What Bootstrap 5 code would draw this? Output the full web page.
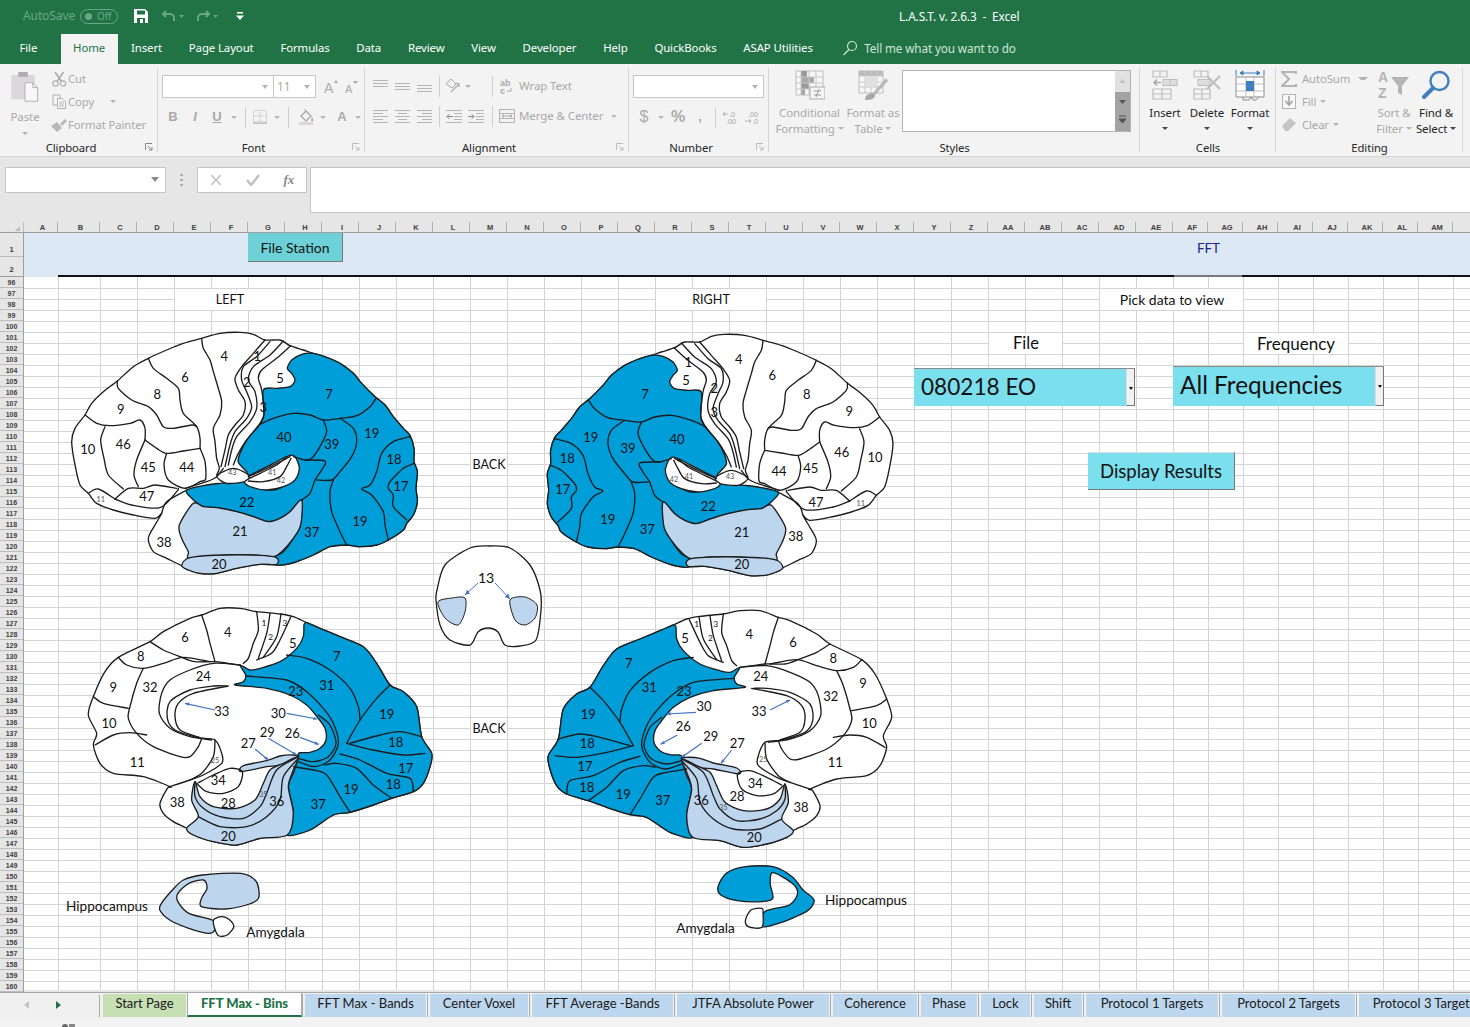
<!DOCTYPE html>
<html lang="en">
<head>
<meta charset="utf-8">
<title>L.A.S.T. v. 2.6.3 - Excel</title>
<link href="https://cdn.jsdelivr.net/npm/bootstrap@5.3.0/dist/css/bootstrap.min.css" rel="stylesheet">
<style>
html,body{width:1470px;height:1027px;overflow:hidden;margin:0;background:#e6e6e6}
body{font-family:"Noto Sans","Open Sans",sans-serif;font-size:11.5px;line-height:1.2;color:#262626;letter-spacing:-.1px}
svg{display:block}
.xl-title{height:32px;background:#217346;color:#fff;font-size:11.8px}
.xl-left{width:899px;padding-left:23px;color:#6aa587;font-size:12px}
.toggle{width:38px;height:15px;border:1px solid #6aa587;border-radius:8px;margin-left:5px;font-size:10px;padding-left:16px;line-height:13px;position:relative}
.toggle::before{content:"";position:absolute;left:4px;top:3px;width:7px;height:7px;border-radius:50%;background:#6aa587}
.qa{margin-left:16px}
.qa.u{margin-left:14px}
.qa.r{margin-left:10px}
.xl-tabs{height:32px;background:#217346;color:#fff;padding-left:6px}
.xl-tabs .tb{padding:0 13.4px;height:30px;margin-top:2px;line-height:28px;font-size:11.4px;white-space:nowrap}
.xl-tabs .tb.on{background:#f3f3f3;color:#217346;margin-left:10px;padding:0 12.5px}
.tabi{margin-left:16px;margin-top:8px}
.tell{color:#cfe3d8;margin-left:6px;font-size:11.7px;line-height:28px;margin-top:2px}
.ribbon{height:93px;background:#f3f3f3;border-bottom:1px solid #d4d4d4}
.rg{height:92px;position:relative;flex:none}
.rg::after{content:"";position:absolute;right:0;top:4px;bottom:4px;width:1px;background:#d6d6d6}
.rg-b{height:74px;flex:none}
.rg-l{height:18px;text-align:center;font-size:11.3px;line-height:19px;color:#262626;position:relative;flex:none}
.rg-l.hl{padding-right:16px}
.launch{position:absolute;right:5px;top:5px}
.g1{width:158px}.g2{width:207px}.g3{width:264px}.g4{width:140px}.g5{width:371px}.g6{width:136px}.g7{width:187px}
.d{color:#a9a9a9}
.combo{height:23px;background:#fff;border:1px solid #c6c6c6;position:relative;flex:none}
.combo::after{content:"";position:absolute;right:5px;top:9px;border:3.5px solid transparent;border-top:4px solid #b4b4b4}
.cw111{width:112px}.cw43{width:43px;padding-left:3px;color:#a9a9a9;line-height:21px;font-size:12px;margin-left:-1px}.cw131{width:131px}
.sl{display:flex;align-items:center;justify-content:center;height:22px;flex:none}
.w8{width:8px}.w10{width:10px}.w12{width:12px}.w14{width:14px}.w20{width:20px}.w22{width:22px}.w24{width:24px}.w30{width:30px}
.car{width:0;height:0;border:3px solid transparent;border-top:3.5px solid #b4b4b4;margin-top:3px;flex:none;display:inline-block}
.car.k{border-top-color:#444}
.sep{width:1px;height:21px;background:#cfcfcf;display:block}
.ltr{font-weight:700;font-size:13px;color:#a9a9a9;font-family:"Liberation Sans",sans-serif}
.pt1{padding-top:11px}.mt8{margin-top:8px}
.px5{padding-left:4px}
.ms-2px{margin-left:2px}
.paste{width:50px;padding-top:8px}
.paste .t{margin-top:3px}
.small-rows{padding-top:3px}
.sr{height:23px;font-size:11.3px}
.sr .i{width:18px;display:flex;justify-content:center;flex:none}
.ed{width:93px;flex:none}
.ed .tx{margin-left:4px}
.big{flex:none;padding-top:6px;text-align:center}
.big .i{height:35px;display:flex;justify-content:center;align-items:flex-start}
.big .t{height:16px;line-height:15px;white-space:nowrap}
.bw73{width:73px}.bw54{width:54px}.bw42{width:42px}.bw44{width:44px}
.k{color:#262626}
.gal{width:229px;height:62px;margin:6px 0 0 2px;border:1px solid #b3b3b3;background:#fff;position:relative;flex:none}
.gal .scr{position:absolute;right:0;top:0;bottom:0;width:15px;background:#e1e1e1}
.gal .scr b{position:absolute;left:0;right:0;top:21px;bottom:0;background:#a3a3a3}
.gal .scr svg{position:absolute;left:3px;top:8px;z-index:1}
.fbar{height:63px;background:#e6e6e6;padding:10px 0 0 5px}
.fn{width:161px;height:26px;background:#fff;border:1px solid #c6c6c6;position:relative;flex:none}
.fn::after{content:"";position:absolute;right:6px;top:9px;border:4px solid transparent;border-top:5px solid #8a8a8a}
.dots{width:31px;flex:none;height:26px;align-items:center;justify-content:center}
.fx{width:110px;height:26px;background:#fff;border:1px solid #c6c6c6;flex:none;font-family:"Liberation Serif",serif;font-style:italic;font-weight:700;color:#8a8a8a;font-size:13px}
.fi{height:46px;background:#fff;border:1px solid #c6c6c6;border-right:0;margin-left:3px;flex:1 1 auto}
.chd{height:13px;background:#e6e6e6;border-bottom:1px solid #9f9f9f;padding-top:2px}
.cor{width:24px;flex:none;border-right:1px solid #c0c0c0;position:relative}
.cor::after{content:"";position:absolute;right:3px;bottom:1px;border-left:5px solid transparent;border-bottom:5px solid #bdbdbd}
.cl{flex:none;width:37px;padding-left:4px;text-align:center;font:700 7.5px/12px "Liberation Sans",sans-serif;color:#404040;border-right:1px solid #b0b0b0;letter-spacing:0}
.cl.a{width:34px}.cl.b{width:42px}.cl.nn{width:35px}
.rh{width:24px;flex:none;background:#e6e6e6;border-right:1px solid #9f9f9f}
.rw{height:11px;text-align:center;font:700 7px/12px "Liberation Sans",sans-serif;color:#404040;border-bottom:1px solid #bdbdbd;letter-spacing:0}
.rw.r1{height:24px;line-height:34px;font-size:7.5px}.rw.r2{height:20px;line-height:26px;border-bottom-color:#9f9f9f;font-size:7.5px}
.band{height:44px;background:#dce9f5;position:relative;overflow:hidden;flex:1 1 auto}
.band::after{content:"";position:absolute;left:34px;right:0;bottom:0;height:2px;background:linear-gradient(to right,#111 0 1116px,#777 1116px 1184px,#111 1184px)}
.fs{position:absolute;left:224px;top:0;width:95px;height:29px;background:#6ed1d8;border:0;border-radius:0;border-right:1px solid #777;border-bottom:1px solid #777;padding:0;font:14px/29px "Lato",sans-serif;color:#111}
.fft{position:absolute;left:1173px;width:22px;top:7px;text-align:center;font:13.5px/16px "Lato",sans-serif;color:#22228c}
.canvas{height:713px;position:relative;flex:1 1 auto;overflow:hidden;background-color:#fff;background-repeat:no-repeat,no-repeat,no-repeat,no-repeat,no-repeat;
background-image:repeating-linear-gradient(to bottom,transparent 0 10px,#d4d4d4 10px 11px),
linear-gradient(#d4d4d4,#d4d4d4),linear-gradient(#d4d4d4,#d4d4d4),
repeating-linear-gradient(to right,transparent 0 36px,#d4d4d4 36px 37px),
repeating-linear-gradient(to right,transparent 0 34px,#d4d4d4 34px 35px);
background-size:100% 100%,1px 100%,1px 100%,1073px 100%,400px 100%;
background-position:0 1px,34px 0,76px 0,77px 0,1150px 0}
.canvas>svg{position:absolute;left:0;top:0}
.canvas svg text{font-family:"Lato",sans-serif;text-anchor:middle;dominant-baseline:central;fill:#111;letter-spacing:0}
.wh{fill:#fff;stroke:none}
.lt{font-size:14px}.cap{font-size:12.6px}.lt2{font-size:16.5px}.lt3{font-size:17px}.ltl{font-size:13.6px}
.n{font-size:39px}.s{font-size:22px;fill:#555!important}.ss{font-size:25px}
.o{fill:#fff;stroke:#1c1c1c;stroke-width:4;stroke-linejoin:round}
.bl{fill:#009ed9;stroke:#1c1c1c;stroke-width:4;stroke-linejoin:round}
.lb{fill:#bdd5ed;stroke:#1c1c1c;stroke-width:4;stroke-linejoin:round}
.wf{fill:#fff;stroke:#1c1c1c;stroke-width:4;stroke-linejoin:round}
.ln{fill:none;stroke:#1c1c1c;stroke-width:4;stroke-linejoin:round;stroke-linecap:round}
.hp *{vector-effect:non-scaling-stroke;stroke-width:1.3px}
.ar{fill:none;stroke:#4472c4;stroke-width:3.5}
.ctl{position:absolute;background:#7bdfee;color:#111;font-family:"Lato",sans-serif;border-top:1px solid #8a8a8a;letter-spacing:0}
.c-file{left:890px;top:91px;width:221px;height:38px;font-size:22.6px;line-height:35px;padding-left:7px}
.c-frq{left:1149px;top:89px;width:211px;height:40px;font-size:24.3px;line-height:36px;padding-left:7px}
.ctl .dd{position:absolute;right:0;top:0;bottom:0;width:9px;background:#f1f1f1;border-left:1px solid #ddd;border-right:1px solid #777;border-bottom:1px solid #777}
.ctl .dd::after{content:"";position:absolute;left:2px;top:18px;border:2px solid transparent;border-top:3px solid #111}
.btn.disp{position:absolute;left:1064px;top:175px;width:147px;height:38px;background:#7bdfee;border:0;border-radius:0;border-right:1px solid #777;border-bottom:1px solid #777;border-top:1px solid #ddd;padding:0;font:18.5px/36px "Lato",sans-serif;color:#111}
.stabs{height:26px;background:#f0f0f0;border-top:1px solid #a8a8a8}
.nav0{width:103px;flex:none;position:relative}
.nav0 i{position:absolute;top:8px;border:4px solid transparent}
.nav0 .p{left:24px;border-right:5px solid #c4c4c4;border-left:0}
.nav0 .f{left:56px;border-left:5px solid #217346;border-right:0}
.nav0::after{content:"";position:absolute;right:3px;top:2px;height:22px;width:1px;background:#aaa}
.st{flex:none;height:23px;margin-top:1px;background:#bdd7ee;color:#1a1a1a;text-align:center;font:13px/19px "Lato",sans-serif;letter-spacing:0;margin-left:4px;box-shadow:-2px 0 0 0 #f0f0f0,-3px 0 0 0 #aaa;white-space:nowrap}
.st.g{background:#c6e0b4;box-shadow:none;margin-left:0}
.st.act{background:#fff;color:#217346;font-weight:900;height:25px;margin-top:-1px;padding-top:2px;border-bottom:2px solid #217346;margin-left:1px;box-shadow:none;border-left:1px solid #aaa;border-right:1px solid #aaa}
.t83{width:83px}.t116{width:115px}.t121{width:121px;margin-left:3px!important}.t98{width:98px}.t141{width:141px}.t150{width:152px}.t84{width:84px}.t56{width:56px}.t49{width:49px}.t48{width:48px}.t132{width:132px}.t133{width:133px}.t130{width:130px}
.stat{height:11px;background:#f3f3f3;overflow:hidden;padding:7px 0 0 6px;font-size:11px}
.stat svg{margin-left:24px;margin-top:-1px}
</style>
</head>
<body>
<div class="xl-title d-flex align-items-center">
  <div class="xl-left d-flex align-items-center">
    <span>AutoSave</span><span class="toggle">Off</span>
    <svg class="qa" width="14" height="14" viewBox="0 0 14 14"><path d="M0 0H11L14 3V14H0Z" fill="#fff"/><rect x="3" y="1.5" width="8" height="4" fill="#217346"/><rect x="3" y="9" width="8" height="5" fill="#217346"/><rect x="6" y="10" width="3" height="4" fill="#fff"/></svg>
    <svg class="qa u" width="24" height="14" viewBox="0 0 24 14"><path d="M4 2 1 5l3 3M1.500 5H8a4 4 0 0 1 4 4v3" fill="none" stroke="#6aa587" stroke-width="2"/><path d="M17 6h5l-2.500 3z" fill="#6aa587"/></svg>
    <svg class="qa r" width="24" height="14" viewBox="0 0 24 14"><path d="M10 2l3 3-3 3M12.500 5H6a4 4 0 0 0-4 4v3" fill="none" stroke="#6aa587" stroke-width="2"/><path d="M17 6h5l-2.500 3z" fill="#6aa587"/></svg>
    <svg class="qa" width="8" height="8" viewBox="0 0 8 8"><rect x="1" y="0" width="6" height="1.500" fill="#fff"/><path d="M0 3.500h8L4 8z" fill="#fff"/></svg>
  </div>
  <div>L.A.S.T. v. 2.6.3 &nbsp;-&nbsp; Excel</div>
</div>
<nav class="xl-tabs d-flex">
  <div class="tb">File</div><div class="tb on">Home</div><div class="tb">Insert</div><div class="tb">Page Layout</div><div class="tb">Formulas</div><div class="tb">Data</div><div class="tb">Review</div><div class="tb">View</div><div class="tb">Developer</div><div class="tb">Help</div><div class="tb">QuickBooks</div><div class="tb">ASAP Utilities</div>
  <svg class="tabi" width="16" height="16" viewBox="0 0 16 16"><circle cx="10" cy="6" r="4.500" fill="none" stroke="#cfe3d8" stroke-width="1.200"/><path d="M7 9.500 1.500 15" stroke="#cfe3d8" stroke-width="1.300"/></svg>
  <div class="tell">Tell me what you want to do</div>
</nav>
<div class="ribbon d-flex">
  <section class="rg g1 d-flex flex-column">
    <div class="rg-b d-flex">
      <div class="paste d-flex flex-column align-items-center d">
        <svg width="30" height="31" viewBox="0 0 30 31"><rect x="1" y="3" width="24" height="25" rx="1" fill="#dbd8db"/><rect x="8" y="0" width="10" height="5" rx="1" fill="#b3adb3"/><path d="M15 11h8l5 5v14H15z" fill="#f8f8f8" stroke="#b0b0b0"/><path d="M23 11v5h5" fill="none" stroke="#b0b0b0"/></svg>
        <span class="t mt-2">Paste</span><span class="car mt-2"></span>
      </div>
      <div class="small-rows d">
        <div class="sr d-flex align-items-center"><span class="i"><svg width="15" height="16" viewBox="0 0 15 16"><circle cx="3.500" cy="12.500" r="2.700" fill="none" stroke="#b0b0b0" stroke-width="1.200"/><circle cx="11" cy="12.500" r="2.700" fill="none" stroke="#b0b0b0" stroke-width="1.200"/><path d="M3 1 9.500 10.500M11.500 1 5 10.500" stroke="#b0b0b0" stroke-width="1.800"/></svg></span><span class="tx">Cut</span></div>
        <div class="sr d-flex align-items-center"><span class="i"><svg width="15" height="15" viewBox="0 0 15 15"><path d="M1 1h7v3M1 1v10h4" fill="none" stroke="#b0b0b0"/><path d="M5.500 4.500h5l3 3v7h-8z" fill="#f8f8f8" stroke="#b0b0b0"/><path d="M7 8h5M7 10h5M7 12h5" stroke="#b8b8b8"/></svg></span><span class="tx">Copy</span><span class="car ms-3"></span></div>
        <div class="sr d-flex align-items-center"><span class="i"><svg width="16" height="14" viewBox="0 0 16 14"><path d="M0 8 6 14l5-4-5-6z" fill="#b8b8b8"/><path d="M9 6 14 1l2 2-5 5z" fill="#b8b8b8"/></svg></span><span class="tx">Format Painter</span></div>
      </div>
    </div>
    <div class="rg-l hl">Clipboard<svg class="launch" width="8" height="8" viewBox="0 0 8 8"><path d="M.5 7V.5H7" fill="none" stroke="#888"/><path d="M3 3 7 7M7 4v3H4" fill="none" stroke="#888"/></svg></div>
  </section>
  <section class="rg g2 d-flex flex-column">
    <div class="rg-b px5 pt1">
      <div class="d-flex align-items-center">
        <div class="combo cw111"></div><div class="combo cw43">11</div>
        <span class="sl w22 ms-1"><svg width="15" height="14" viewBox="0 0 15 14"><text x="0" y="13" font-size="14" fill="#aaa" font-family="Liberation Sans">A</text><path d="M10 3 12 0l2 3z" fill="#aaa"/></svg></span>
        <span class="sl w20"><svg width="14" height="14" viewBox="0 0 14 14"><text x="0" y="13" font-size="11" fill="#aaa" font-family="Liberation Sans">A</text><path d="M8 1h5l-2.500 3z" fill="#aaa"/></svg></span>
      </div>
      <div class="d-flex mt8">
        <span class="sl w22 ltr">B</span><span class="sl w22 ltr"><i>I</i></span><span class="sl w22 ltr"><u>U</u></span><span class="sl w12"><span class="car"></span></span><span class="sl w10"><span class="sep"></span></span>
        <span class="sl w20"><svg width="14" height="14" viewBox="0 0 14 14"><rect x=".5" y=".5" width="13" height="11" fill="none" stroke="#bbb" stroke-dasharray="1 1"/><path d="M7 0v12M0 6h14" stroke="#bbb" stroke-dasharray="1 1"/><rect y="12.500" width="14" height="1.500" fill="#bbb"/></svg></span>
        <span class="sl w14"><span class="car"></span></span><span class="sl w8"><span class="sep"></span></span>
        <span class="sl w22 ms-1"><svg width="16" height="16" viewBox="0 0 16 16"><path d="M2 7 7 2l5 5-5 5z" fill="#f2f2f2" stroke="#aaa" stroke-width="1.300"/><path d="M7 2 5 0" stroke="#aaa"/><path d="M13 8c1 2 2 3 1 4s-2 0-2-1z" fill="#aaa"/><rect y="13" width="14" height="3" fill="#dcd8d8"/></svg></span>
        <span class="sl w10"><span class="car"></span></span>
        <span class="sl w20 ms-1 ltr">A</span><span class="sl w12"><span class="car"></span></span>
      </div>
    </div>
    <div class="rg-l hl">Font<svg class="launch" width="8" height="8" viewBox="0 0 8 8"><path d="M.5 7V.5H7" fill="none" stroke="#bbb"/><path d="M3 3 7 7M7 4v3H4" fill="none" stroke="#bbb"/></svg></div>
  </section>
  <section class="rg g3 d-flex flex-column">
    <div class="rg-b px5 pt1 d">
      <div class="d-flex align-items-center">
        <span class="sl w22"><svg width="15" height="12" viewBox="0 0 15 12"><path d="M0 .5h15M0 3.500h15M0 6.500h15" stroke="#b4b4b4"/></svg></span>
        <span class="sl w22"><svg width="15" height="12" viewBox="0 0 15 12"><path d="M0 3.500h15M0 6.500h15M0 9.500h15" stroke="#b4b4b4"/></svg></span>
        <span class="sl w22"><svg width="15" height="12" viewBox="0 0 15 12"><path d="M0 5.500h15M0 8.500h15M0 11.500h15" stroke="#b4b4b4"/></svg></span>
        <span class="sl w8"><span class="sep"></span></span>
        <span class="sl w30"><svg width="16" height="15" viewBox="0 0 16 15"><path d="M1 5 6 0l5 5-4 4z" fill="none" stroke="#aaa"/><path d="M6 13 14 5M11 4l3 1v3" fill="none" stroke="#aaa" stroke-width="1.200"/></svg><span class="car ms-1"></span></span>
        <span class="sl w24 justify-content-end pe-1"><span class="sep"></span></span>
        <span class="sl w20"><svg width="14" height="15" viewBox="0 0 14 15"><text x="0" y="7" font-size="9" fill="#aaa" font-weight="700" font-family="Liberation Sans">ab</text><text x="0" y="14.500" font-size="9" fill="#aaa" font-weight="700" font-family="Liberation Sans">c</text><path d="M11 9v3H7" fill="none" stroke="#aaa"/></svg></span>
        <span class="ms-2px">Wrap Text</span>
      </div>
      <div class="d-flex mt8 align-items-center">
        <span class="sl w22"><svg width="15" height="13" viewBox="0 0 15 13"><path d="M0 .5h15M0 3.500h10M0 6.500h15M0 9.500h10M0 12.500h15" stroke="#b4b4b4"/></svg></span>
        <span class="sl w22"><svg width="15" height="13" viewBox="0 0 15 13"><path d="M0 .5h15M3 3.500h9M0 6.500h15M3 9.500h9M0 12.500h15" stroke="#b4b4b4"/></svg></span>
        <span class="sl w22"><svg width="15" height="13" viewBox="0 0 15 13"><path d="M0 .5h15M5 3.500h10M0 6.500h15M5 9.500h10M0 12.500h15" stroke="#b4b4b4"/></svg></span>
        <span class="sl w8"><span class="sep"></span></span>
        <span class="sl w22"><svg width="16" height="13" viewBox="0 0 16 13"><path d="M0 .5h16M8 3.500h8M8 6.500h8M8 9.500h8M0 12.500h16" stroke="#b4b4b4"/><path d="M7 6.500H1M3.500 4 1 6.500 3.500 9" fill="none" stroke="#8a8a8a"/></svg></span>
        <span class="sl w22"><svg width="16" height="13" viewBox="0 0 16 13"><path d="M0 .5h16M8 3.500h8M8 6.500h8M8 9.500h8M0 12.500h16" stroke="#b4b4b4"/><path d="M0 6.500h6M3.500 4 6 6.500 3.500 9" fill="none" stroke="#8a8a8a"/></svg></span>
        <span class="sl w10"><span class="sep"></span></span>
        <span class="sl w20"><svg width="16" height="14" viewBox="0 0 16 14"><rect x=".5" y=".5" width="15" height="13" fill="none" stroke="#b4b4b4"/><path d="M0 4.500h16M0 9.500h16" stroke="#b4b4b4"/><path d="M3 7h10M5 5.500 3 7l2 1.500M11 5.500 13 7l-2 1.500" fill="none" stroke="#9a9a9a" stroke-width=".8"/></svg></span>
        <span class="ms-2px">Merge &amp; Center</span><span class="car ms-2"></span>
      </div>
    </div>
    <div class="rg-l hl">Alignment<svg class="launch" width="8" height="8" viewBox="0 0 8 8"><path d="M.5 7V.5H7" fill="none" stroke="#bbb"/><path d="M3 3 7 7M7 4v3H4" fill="none" stroke="#bbb"/></svg></div>
  </section>
  <section class="rg g4 d-flex flex-column">
    <div class="rg-b px5 pt1 d">
      <div class="combo cw131"></div>
      <div class="d-flex mt8 align-items-center">
        <span class="sl w22 ltr fw-normal fs-6">$</span><span class="sl w12"><span class="car"></span></span><span class="sl w22 ltr fs-6">%</span><span class="sl w22 ltr">,</span><span class="sl w8"><span class="sep"></span></span>
        <span class="sl w22"><svg width="16" height="15" viewBox="0 0 16 15"><text x="7" y="6.500" font-size="7.500" fill="#aaa" font-family="Liberation Sans">.0</text><text x="4" y="14" font-size="7.500" fill="#aaa" font-family="Liberation Sans">.00</text><path d="M6 4H1M3 2 1 4l2 2" fill="none" stroke="#aaa" stroke-width=".9"/></svg></span>
        <span class="sl w22"><svg width="16" height="15" viewBox="0 0 16 15"><text x="4" y="6.500" font-size="7.500" fill="#aaa" font-family="Liberation Sans">.00</text><text x="8" y="14" font-size="7.500" fill="#aaa" font-family="Liberation Sans">.0</text><path d="M1 11h6M5 9l2 2-2 2" fill="none" stroke="#aaa" stroke-width=".9"/></svg></span>
      </div>
    </div>
    <div class="rg-l hl">Number<svg class="launch" width="8" height="8" viewBox="0 0 8 8"><path d="M.5 7V.5H7" fill="none" stroke="#bbb"/><path d="M3 3 7 7M7 4v3H4" fill="none" stroke="#bbb"/></svg></div>
  </section>
  <section class="rg g5 d-flex flex-column">
    <div class="rg-b d-flex px5 d">
      <div class="big bw73"><div class="i"><svg width="30" height="32" viewBox="0 0 30 32"><path d="M1 1h27v24H1z" fill="#f6f6f6" stroke="#bdbdbd"/><rect x="6" y="1" width="6" height="6" fill="#999"/><rect x="6" y="7" width="13" height="6" fill="#a8a8a8"/><rect x="6" y="13" width="8" height="6" fill="#999"/><rect x="6" y="19" width="4" height="6" fill="#a8a8a8"/><path d="M6 1v24M14 1v24M21 1v24M1 7h27M1 13h27M1 19h27" stroke="#c8c8c8" fill="none"/><rect x="15" y="17" width="15" height="12" fill="#f5f5f5" stroke="#aaa"/><path d="M19 21h7M19 25h7M24 19l-3 8" stroke="#999"/></svg></div><div class="t">Conditional</div><div class="t">Formatting <span class="car"></span></div></div>
      <div class="big bw54"><div class="i"><svg width="30" height="30" viewBox="0 0 30 30"><path d="M1 1h24v22H1z" fill="#f6f6f6" stroke="#bdbdbd"/><rect x="1" y="1" width="24" height="5" fill="#bbb"/><path d="M7 1v22M13 1v22M19 1v22M1 6h24M1 12h24M1 17h24" stroke="#c8c8c8"/><rect x="7" y="6" width="12" height="11" fill="#e0e0e0"/><path d="M28 8 15 23l2 2L30 11z" fill="#b8b8b8"/><path d="M7 30c0-4 3-7 8-7l2 2c0 4-4 5-10 5z" fill="#a8a8a8"/></svg></div><div class="t">Format as</div><div class="t">Table <span class="car"></span></div></div>
      <div class="gal"><div class="scr"><svg width="9" height="44" viewBox="0 0 9 44"><path d="M1 4 4.500 0 8 4z" fill="#c4c4c4"/><path d="M1 21h7L4.500 25z" fill="#555"/><path d="M1 37h7M1 40h7L4.500 44z" stroke="#555" fill="#555"/></svg><b></b></div></div>
    </div>
    <div class="rg-l">Styles</div>
  </section>
  <section class="rg g6 d-flex flex-column">
    <div class="rg-b d-flex px5 k">
      <div class="big bw42"><div class="i"><svg width="28" height="30" viewBox="0 0 28 30"><path d="M2 1h14v6H2zM9 1v6M2 19h18v10H2zM2 24h18M11 19v10" fill="none" stroke="#bdbdbd" stroke-width="1.200"/><rect x="12" y="9.500" width="14" height="6" fill="#dedede" stroke="#bdbdbd"/><path d="M19 9.500v6" stroke="#bdbdbd"/><path d="M10 12.500H3M6 9.500l-3 3 3 3" fill="none" stroke="#a8a8a8" stroke-width="1.500"/></svg></div><div class="t">Insert</div><div class="t"><span class="car k"></span></div></div>
      <div class="big bw42"><div class="i"><svg width="30" height="30" viewBox="0 0 30 30"><path d="M2 1h14v6H2zM9 1v6M2 19h16v10H2zM2 24h16M10 19v10" fill="none" stroke="#bdbdbd" stroke-width="1.200"/><rect x="6" y="9.500" width="12" height="6" fill="#dedede" stroke="#bdbdbd"/><path d="M15 6 28 19M28 6 15 19" stroke="#bdbdbd" stroke-width="2"/></svg></div><div class="t">Delete</div><div class="t"><span class="car k"></span></div></div>
      <div class="big bw44"><div class="i"><svg width="30" height="32" viewBox="0 0 30 32"><path d="M1 7h28v20H1z" fill="#fff" stroke="#8a8a8a"/><path d="M11 7v20M19 7v20M1 14h28M1 21h28" stroke="#bdbdbd"/><rect x="11" y="11" width="8" height="10" fill="#3f7fbf"/><path d="M5 3h20M5 3l3-2v4zM25 3l-3-2v4z" fill="#3f7fbf" stroke="#3f7fbf"/><path d="M1 0v6M29 0v6" stroke="#3f7fbf"/><path d="M8 27v3h6l2-3 2 3h3l3-3" fill="none" stroke="#8a8a8a"/></svg></div><div class="t">Format</div><div class="t"><span class="car k"></span></div></div>
    </div>
    <div class="rg-l">Cells</div>
  </section>
  <section class="rg g7 d-flex flex-column">
    <div class="rg-b d-flex px5 d">
      <div class="small-rows ed">
        <div class="sr d-flex align-items-center"><span class="i"><svg width="16" height="16" viewBox="0 0 16 16"><path d="M15 3V1H1l7 7-7 7h14v-2" fill="none" stroke="#b4b4b4" stroke-width="2"/></svg></span><span class="tx">AutoSum</span><span class="car ms-2 ps-1"></span></div>
        <div class="sr d-flex align-items-center"><span class="i"><svg width="14" height="15" viewBox="0 0 14 15"><rect x=".5" y=".5" width="13" height="14" fill="#f8f8f8" stroke="#b4b4b4"/><path d="M7 2v9M3.500 7 7 11l3.500-4" fill="none" stroke="#a0a0a0" stroke-width="1.500"/></svg></span><span class="tx">Fill</span><span class="car ms-1"></span></div>
        <div class="sr d-flex align-items-center"><span class="i"><svg width="14" height="13" viewBox="0 0 14 13"><path d="M0 8 8 0l6 5-8 8H3z" fill="#c4c4c4"/></svg></span><span class="tx">Clear</span><span class="car ms-1"></span></div>
      </div>
      <div class="big bw42"><div class="i"><svg width="32" height="30" viewBox="0 0 32 30"><text x="0" y="12" font-size="14" font-weight="700" fill="#b4b4b4" font-family="Liberation Sans">A</text><text x="0" y="28" font-size="14" font-weight="700" fill="#b4b4b4" font-family="Liberation Sans">Z</text><path d="M13 7h18l-7 9v9l-4-2v-7z" fill="#b4b4b4"/></svg></div><div class="t">Sort &amp;</div><div class="t">Filter <span class="car"></span></div></div>
      <div class="big bw42 k"><div class="i"><svg width="30" height="30" viewBox="0 0 30 30"><circle cx="18.500" cy="11" r="9" fill="none" stroke="#3f7fbf" stroke-width="2.400"/><path d="M12 18 3 27" stroke="#3f7fbf" stroke-width="4" stroke-linecap="round"/></svg></div><div class="t">Find &amp;</div><div class="t">Select <span class="car k"></span></div></div>
    </div>
    <div class="rg-l">Editing</div>
  </section>
</div>
<div class="fbar d-flex">
  <div class="fn"></div>
  <div class="dots d-flex"><svg width="3" height="14" viewBox="0 0 3 14"><path d="M0 1h3v2H0zM0 6h3v2H0zM0 11h3v2H0z" fill="#b0b0b0"/></svg></div>
  <div class="fx d-flex align-items-center justify-content-around">
    <svg width="12" height="12" viewBox="0 0 12 12"><path d="M1 1 11 11M11 1 1 11" stroke="#c0c0c0" stroke-width="1.500"/></svg>
    <svg width="14" height="12" viewBox="0 0 14 12"><path d="M1 6l4 5 8-10" fill="none" stroke="#c0c0c0" stroke-width="2.400"/></svg>
    <span>fx</span>
  </div>
  <div class="fi"></div>
</div>
<div class="chd d-flex">
  <div class="cor"></div><div class="cl a">A</div><div class="cl b">B</div><div class="cl">C</div><div class="cl">D</div><div class="cl">E</div><div class="cl">F</div><div class="cl">G</div><div class="cl">H</div><div class="cl">I</div><div class="cl">J</div><div class="cl">K</div><div class="cl">L</div><div class="cl">M</div><div class="cl">N</div><div class="cl">O</div><div class="cl">P</div><div class="cl">Q</div><div class="cl">R</div><div class="cl">S</div><div class="cl">T</div><div class="cl">U</div><div class="cl">V</div><div class="cl">W</div><div class="cl">X</div><div class="cl">Y</div><div class="cl">Z</div><div class="cl">AA</div><div class="cl">AB</div><div class="cl">AC</div><div class="cl">AD</div><div class="cl">AE</div><div class="cl nn">AF</div><div class="cl nn">AG</div><div class="cl nn">AH</div><div class="cl nn">AI</div><div class="cl nn">AJ</div><div class="cl nn">AK</div><div class="cl nn">AL</div><div class="cl nn">AM</div>
</div>
<div class="d-flex">
  <div class="rh"><div class="rw r1">1</div><div class="rw r2">2</div></div>
  <div class="band"><button class="btn fs" type="button">File Station</button><div class="fft">FFT</div></div>
</div>
<div class="d-flex">
  <div class="rh overflow-hidden">
<div class="rw">96</div><div class="rw">97</div><div class="rw">98</div><div class="rw">99</div><div class="rw">100</div><div class="rw">101</div><div class="rw">102</div><div class="rw">103</div><div class="rw">104</div><div class="rw">105</div><div class="rw">106</div><div class="rw">107</div><div class="rw">108</div><div class="rw">109</div><div class="rw">110</div><div class="rw">111</div><div class="rw">112</div><div class="rw">113</div><div class="rw">114</div><div class="rw">115</div><div class="rw">116</div><div class="rw">117</div><div class="rw">118</div><div class="rw">119</div><div class="rw">120</div><div class="rw">121</div><div class="rw">122</div><div class="rw">123</div><div class="rw">124</div><div class="rw">125</div><div class="rw">126</div><div class="rw">127</div><div class="rw">128</div><div class="rw">129</div><div class="rw">130</div><div class="rw">131</div><div class="rw">132</div><div class="rw">133</div><div class="rw">134</div><div class="rw">135</div><div class="rw">136</div><div class="rw">137</div><div class="rw">138</div><div class="rw">139</div><div class="rw">140</div><div class="rw">141</div><div class="rw">142</div><div class="rw">143</div><div class="rw">144</div><div class="rw">145</div><div class="rw">146</div><div class="rw">147</div><div class="rw">148</div><div class="rw">149</div><div class="rw">150</div><div class="rw">151</div><div class="rw">152</div><div class="rw">153</div><div class="rw">154</div><div class="rw">155</div><div class="rw">156</div><div class="rw">157</div><div class="rw">158</div><div class="rw">159</div><div class="rw">160</div>
  </div>
  <div class="canvas">
    <svg width="1446" height="713" viewBox="24 277 1446 713">
      <defs>
        <marker id="ah" markerUnits="userSpaceOnUse" markerWidth="14" markerHeight="12" refX="12" refY="6" orient="auto"><path d="M0 1 13 6 0 11z" fill="#4472c4"/></marker>
        <marker id="ah2" markerUnits="userSpaceOnUse" markerWidth="6" markerHeight="6" refX="5" refY="3" orient="auto"><path d="M0 .5 5 3 0 5.500z" fill="#4472c4"/></marker>
        <g id="lat">
          <polygon class="o" points="425,40 480,25 540,22 580,28 615,45 660,45 690,62 730,75 760,85 800,97 840,115 880,145 905,175 945,215 975,240 1000,275 1030,310 1050,332 1062,370 1062,410 1072,440 1068,490 1072,530 1060,570 1040,595 1030,615 985,645 950,660 900,665 860,660 810,665 760,690 710,710 680,718 650,720 600,718 530,730 470,745 420,745 385,735 365,722 320,700 280,680 265,640 285,600 305,565 285,580 220,570 160,555 110,535 85,505 60,480 45,420 35,350 45,310 75,270 95,235 130,200 172,168 220,125 265,100 320,75 370,55"/>
          <polygon class="bl" points="682,130 695,105 725,88 760,85 800,97 840,115 880,145 905,175 945,215 975,240 1000,275 1030,310 1050,332 1062,370 1062,410 1072,440 1068,490 1072,530 1060,570 1040,595 1030,615 985,645 950,660 900,665 860,660 810,665 760,690 710,710 680,718 650,720 638,700 670,680 700,640 720,600 725,525 690,560 660,580 625,590 580,575 530,560 470,548 430,545 395,520 380,495 440,480 480,475 550,470 565,475 590,488 640,495 680,478 710,450 715,420 700,395 680,395 640,415 570,450 560,440 535,412 540,385 560,345 600,298 612,270 610,195 650,190 690,185 705,165 695,145"/>
          <polygon class="lb" points="400,535 430,545 470,548 530,560 580,575 625,590 660,580 690,560 725,525 722,600 700,640 665,680 640,695 580,690 500,690 390,700 385,680 365,640 358,600"/>
          <polygon class="lb" points="390,698 500,690 640,695 650,718 600,718 530,730 470,745 420,745 385,735 365,722"/>
          <polygon class="wf" points="470,455 490,440 520,430 550,440 568,455 555,470 500,475"/>
          <polygon class="wf" points="560,465 600,445 650,420 685,393 705,395 718,430 705,465 670,485 620,495 580,488 555,475"/>
          <polyline class="ln" points="565,455 620,430 690,395"/>
          <polyline class="ln" points="565,468 610,470 660,455 680,425 693,400"/>
          <polyline class="ln" points="425,40 430,70 450,105 460,140 475,190 485,230 480,270 460,310 465,350 470,400 478,430 470,450"/>
          <polyline class="ln" points="615,45 580,85 545,125 525,160 535,195 555,230 550,270 525,300 505,330 495,375 483,425"/>
          <polyline class="ln" points="630,50 590,95 550,125 545,165 560,200 575,245 560,280 525,320 510,360 495,425"/>
          <polyline class="ln" points="670,48 630,90 580,125 565,165 585,200 590,250 570,290 530,335 515,375 505,420"/>
          <polyline class="ln" points="692,62 650,100 605,135 595,160 605,195 612,265 600,295 560,345 535,385 520,420"/>
          <polyline class="ln" points="265,100 280,130 320,160 355,190 360,225 370,265 410,305 420,340 420,370"/>
          <polyline class="ln" points="172,168 175,190 215,225 265,245 290,270 310,305 340,310 395,300 410,305"/>
          <polyline class="ln" points="75,270 110,295 150,302 210,295 240,285 255,310 255,345"/>
          <polyline class="ln" points="135,305 122,345 132,400 145,450 190,492"/>
          <polyline class="ln" points="85,505 115,492 165,522"/>
          <polyline class="ln" points="165,522 205,490 250,490 285,480 350,490"/>
          <polyline class="ln" points="255,345 290,370 320,385 370,378 420,370"/>
          <polyline class="ln" points="255,345 230,405 222,450 235,485"/>
          <polyline class="ln" points="320,385 312,420 325,465 375,490 420,470 437,462 435,410 420,370"/>
          <polyline class="ln" points="165,522 215,540 300,548 350,500 355,490"/>
          <polyline class="ln" points="305,565 320,530 380,495"/>
          <polyline class="ln" points="375,490 440,470 470,455 490,430"/>
          <polyline class="ln" points="600,298 640,280 700,265 750,270 790,285 840,280 890,272 930,245 948,220"/>
          <polyline class="ln" points="790,285 800,320 780,365 755,400 735,405 700,395"/>
          <polyline class="ln" points="840,280 880,310 890,350 875,395 840,440 815,465 770,465"/>
          <polyline class="ln" points="735,405 795,408 785,435 765,465 750,505 725,525"/>
          <polyline class="ln" points="820,465 810,500 815,560 840,620 860,660"/>
          <polyline class="ln" points="1050,335 1000,350 965,385 950,440 930,480 905,492 935,510 970,560 975,600 985,645"/>
          <polyline class="ln" points="1062,415 1030,430 990,470 985,490 1000,510 1000,545 1040,585"/>
        </g>
        <g id="med">
          <polygon class="o" points="365,45 420,25 480,25 530,35 600,42 640,50 680,68 720,85 780,110 850,140 890,190 930,255 970,275 1010,320 1025,410 1055,460 1050,500 1030,550 1000,575 935,595 880,615 810,637 760,645 690,690 622,705 540,715 470,735 400,725 340,705 320,685 280,665 250,640 240,610 262,565 270,560 190,530 100,520 60,490 40,435 50,400 25,345 40,290 75,215 115,172 210,125 250,95 330,55"/>
          <polygon class="bl" points="680,68 720,85 780,110 850,140 890,190 930,255 970,275 1010,320 1025,410 1055,460 1050,500 1030,550 1000,575 935,595 880,615 810,637 760,645 690,690 622,705 640,640 625,560 640,520 650,490 655,462 662,458 690,457 720,445 738,420 735,385 715,355 680,315 630,285 560,265 465,255 490,245 497,225 480,195 510,210 540,205 600,185 650,145 670,110 672,75"/>
          <polygon class="lb" points="490,497 560,482 600,468 640,465 655,470 600,495 560,500 483,515"/>
          <polygon class="lb" points="345,545 335,600 355,650 320,685 340,705 400,725 470,735 540,715 622,705 640,640 625,560 640,510 655,470 610,490 570,510 550,550 525,600 470,625 400,620 360,590"/>
          <polyline class="ln" points="345,545 345,590 370,625 420,650 490,655 540,620 560,580 590,510 655,470"/>
          <polyline class="ln" points="355,650 420,680 500,680 560,650 600,600 610,530 655,475"/>
          <polyline class="ln" points="350,550 380,575 430,580 475,560 487,515 450,505 400,525 355,548"/>
          <polyline class="ln" points="365,45 380,90 390,130 405,185"/>
          <polyline class="ln" points="530,35 535,90 520,130 505,175 490,190"/>
          <polyline class="ln" points="570,40 560,100 535,175"/>
          <polyline class="ln" points="603,42 590,110 550,172"/>
          <polyline class="ln" points="632,52 600,120 575,160 530,180"/>
          <polyline class="ln" points="210,125 250,150 300,170 345,185 405,185 480,195"/>
          <polyline class="ln" points="115,172 140,195 190,205 250,190 310,172 390,185"/>
          <polyline class="ln" points="190,205 170,250 150,320 145,355 170,400 220,440 300,470 330,470 355,440 365,415"/>
          <polyline class="ln" points="40,290 70,310 145,325"/>
          <polyline class="ln" points="45,435 100,405 150,398 200,405"/>
          <polyline class="ln" points="480,195 400,190 330,210 270,240 245,280 238,340 270,385 330,410 395,420"/>
          <polyline class="ln" points="440,258 400,258 330,270 270,305 262,355 285,390 350,412 370,415"/>
          <polyline class="ln" points="445,258 340,280 295,310 285,350 300,390 360,413"/>
          <polyline class="ln" points="365,415 405,420 425,460 425,490 370,525 330,540 270,560"/>
          <polyline class="ln" points="405,420 400,470 365,520 330,540"/>
          <polyline class="ln" points="715,345 750,375 768,430 745,470 700,485 655,475"/>
          <polyline class="ln" points="655,485 705,500 750,480 775,430 760,370 730,325 680,275 620,240 500,228"/>
          <polyline class="ln" points="620,165 680,175 750,210 810,265 835,320 840,360"/>
          <polyline class="ln" points="930,255 890,295 840,360 800,430"/>
          <polyline class="ln" points="1025,410 960,395 900,405 810,430"/>
          <polyline class="ln" points="1035,460 970,465 880,450 800,430"/>
          <polyline class="ln" points="1000,575 990,535 920,520 840,480 780,462"/>
          <polyline class="ln" points="935,595 880,555 830,505 770,490 735,495"/>
          <polyline class="ln" points="810,637 780,590 740,525 700,510 640,500"/>
        </g>
      </defs>
      <!-- merged white cells -->
      <rect class="wh" x="175" y="289" width="110" height="21"/>
      <rect class="wh" x="656" y="289" width="110" height="21"/>
      <rect class="wh" x="1100" y="289" width="143" height="21"/>
      <rect class="wh" x="989" y="333" width="73" height="21"/>
      <rect class="wh" x="1244" y="333" width="104" height="21"/>
      <rect class="wh" x="471" y="454" width="36" height="21"/>
      <rect class="wh" x="471" y="718" width="36" height="21"/>
      <text class="cap" x="230" y="299.500">LEFT</text>
      <text class="cap" x="711" y="299.500">RIGHT</text>
      <text class="lt" x="1172" y="299">Pick data to view</text>
      <text class="lt2" x="1026" y="343">File</text>
      <text class="lt3" x="1296" y="343">Frequency</text>
      <text class="cap" x="489" y="464.500">BACK</text>
      <text class="cap" x="489" y="728.500">BACK</text>

      <g transform="translate(60 325) scale(.33333)">
        <use href="#lat"/>
        <text class="n" x="493" y="92">4</text><text class="n" x="592" y="92">1</text><text class="n" x="560" y="170">2</text><text class="n" x="610" y="245">3</text><text class="n" x="660" y="160">5</text><text class="n" x="375" y="155">6</text><text class="n" x="292" y="208">8</text><text class="n" x="182" y="253">9</text><text class="n" x="83" y="373">10</text><text class="n" x="190" y="358">46</text><text class="n" x="265" y="425">45</text><text class="n" x="380" y="425">44</text><text class="n" x="260" y="512">47</text><text class="s" x="122" y="525">11</text><text class="s" x="517" y="443">43</text><text class="s" x="637" y="442">41</text><text class="s" x="663" y="467">42</text><text class="n" x="807" y="207">7</text><text class="n" x="672" y="335">40</text><text class="n" x="815" y="358">39</text><text class="n" x="935" y="323">19</text><text class="n" x="1002" y="403">18</text><text class="n" x="1023" y="483">17</text><text class="n" x="900" y="588">19</text><text class="n" x="560" y="530">22</text><text class="n" x="540" y="617">21</text><text class="n" x="477" y="718">20</text><text class="n" x="755" y="622">37</text><text class="n" x="312" y="650">38</text>
      </g>
      <use href="#lat" transform="translate(904.67 327) scale(-.33333 .33333)"/>
      <g transform="translate(540 325) scale(.33333)">
        <text class="n" x="445" y="110">1</text><text class="n" x="438" y="165">5</text><text class="n" x="523" y="188">2</text><text class="n" x="523" y="262">3</text><text class="n" x="596" y="103">4</text><text class="n" x="697" y="150">6</text><text class="n" x="800" y="208">8</text><text class="n" x="928" y="257">9</text><text class="n" x="1005" y="395">10</text><text class="n" x="905" y="380">46</text><text class="n" x="812" y="430">45</text><text class="n" x="717" y="437">44</text><text class="n" x="828" y="530">47</text><text class="s" x="962" y="535">11</text><text class="s" x="570" y="455">43</text><text class="s" x="447" y="455">41</text><text class="s" x="402" y="463">42</text><text class="n" x="315" y="207">7</text><text class="n" x="411" y="342">40</text><text class="n" x="264" y="368">39</text><text class="n" x="152" y="337">19</text><text class="n" x="82" y="400">18</text><text class="n" x="68" y="492">17</text><text class="n" x="203" y="582">19</text><text class="n" x="505" y="542">22</text><text class="n" x="605" y="622">21</text><text class="n" x="605" y="718">20</text><text class="n" x="322" y="613">37</text><text class="n" x="767" y="633">38</text>
      </g>

      <g transform="translate(80 600) scale(.33333)">
        <use href="#med"/>
        <path class="ar" marker-end="url(#ah)" d="M405 330 315 310"/><path class="ar" marker-end="url(#ah)" d="M620 340 712 357"/><path class="ar" marker-end="url(#ah)" d="M660 412 716 433"/><path class="ar" marker-end="url(#ah)" d="M565 415 650 465"/><path class="ar" marker-end="url(#ah)" d="M525 447 565 480"/>
        <text class="n" x="443" y="95">4</text><text class="n" x="315" y="110">6</text><text class="n" x="182" y="167">8</text><text class="n" x="100" y="260">9</text><text class="n" x="210" y="262">32</text><text class="n" x="87" y="370">10</text><text class="n" x="172" y="485">11</text><text class="n" x="370" y="228">24</text><text class="n" x="425" y="332">33</text><text class="n" x="595" y="338">30</text><text class="n" x="562" y="395">29</text><text class="n" x="505" y="428">27</text><text class="n" x="637" y="398">26</text><text class="n" x="647" y="272">23</text><text class="n" x="740" y="255">31</text><text class="n" x="770" y="168">7</text><text class="n" x="920" y="343">19</text><text class="n" x="947" y="425">18</text><text class="n" x="977" y="505">17</text><text class="n" x="940" y="553">18</text><text class="n" x="813" y="568">19</text><text class="n" x="715" y="613">37</text><text class="n" x="590" y="603">36</text><text class="s" x="550" y="585">35</text><text class="n" x="445" y="608">28</text><text class="n" x="415" y="540">34</text><text class="n" x="292" y="607">38</text><text class="n" x="445" y="707">20</text><text class="s" x="405" y="483">25</text><text class="ss" x="552" y="68">1</text><text class="ss" x="572" y="112">2</text><text class="ss" x="615" y="68">3</text><text class="n" x="638" y="130">5</text>
      </g>
      <use href="#med" transform="translate(900 602.33) scale(-.33333 .33333)"/>
      <g transform="translate(540 600) scale(.33333)">
        <path class="ar" marker-end="url(#ah)" d="M468 337 380 342"/><path class="ar" marker-end="url(#ah)" d="M412 405 362 433"/><path class="ar" marker-end="url(#ah)" d="M485 430 425 472"/><path class="ar" marker-end="url(#ah)" d="M575 450 543 490"/><path class="ar" marker-end="url(#ah)" d="M690 330 750 300"/>
        <text class="n" x="435" y="113">5</text><text class="ss" x="470" y="72">1</text><text class="ss" x="511" y="113">2</text><text class="ss" x="527" y="72">3</text><text class="n" x="628" y="103">4</text><text class="n" x="759" y="125">6</text><text class="n" x="880" y="173">8</text><text class="n" x="969" y="248">9</text><text class="n" x="872" y="288">32</text><text class="n" x="988" y="370">10</text><text class="n" x="886" y="485">11</text><text class="n" x="662" y="228">24</text><text class="n" x="657" y="332">33</text><text class="n" x="492" y="317">30</text><text class="n" x="430" y="377">26</text><text class="n" x="512" y="407">29</text><text class="n" x="592" y="428">27</text><text class="s" x="670" y="480">25</text><text class="n" x="432" y="272">23</text><text class="n" x="328" y="260">31</text><text class="n" x="266" y="190">7</text><text class="n" x="145" y="342">19</text><text class="n" x="142" y="430">18</text><text class="n" x="135" y="497">17</text><text class="n" x="140" y="560">18</text><text class="n" x="250" y="583">19</text><text class="n" x="368" y="600">37</text><text class="n" x="484" y="600">36</text><text class="s" x="550" y="622">35</text><text class="n" x="591" y="587">28</text><text class="n" x="646" y="548">34</text><text class="n" x="783" y="620">38</text><text class="n" x="643" y="712">20</text>
      </g>

      <!-- back view -->
      <polygon points="437,590 445,565 470,548 490,546 510,548 530,565 540,590 541,610 536,640 520,646 505,645 498,632 488,628 478,632 470,645 450,640 440,625 436,600" fill="#fff" stroke="#1c1c1c" stroke-width="1.300" stroke-linejoin="round"/>
      <polygon points="438,602 452,598 465,598 465,612 458,625 445,618" fill="#bdd5ed" stroke="#1c1c1c" stroke-width="1"/>
      <polygon points="510,600 525,597 537,605 535,618 525,625 515,620" fill="#bdd5ed" stroke="#1c1c1c" stroke-width="1"/>
      <path d="M478 583 465 595" stroke="#4472c4" fill="none" marker-end="url(#ah2)"/><path d="M495 583 510 599" stroke="#4472c4" fill="none" marker-end="url(#ah2)"/>
      <text class="lt" x="486" y="577">13</text>

      <!-- hippocampus -->
      <g class="hp" transform="translate(60 860) scale(.5484 .33333)">
        <polygon class="lb" points="185,130 205,90 225,60 260,45 330,40 358,65 362,115 340,135 300,147 258,140 258,115 268,85 262,60 235,70 215,100 215,125 235,160 280,182 282,210 270,220 235,205 200,180 182,150"/>
        <polygon class="wf" points="280,180 295,170 308,178 317,200 305,225 290,228 283,210"/>
        <polygon class="bl" points="1200,80 1215,40 1250,20 1300,20 1335,50 1355,90 1375,120 1365,150 1335,175 1310,190 1280,200 1285,155 1330,135 1345,100 1335,70 1300,38 1295,70 1300,115 1280,125 1235,122 1205,105"/>
        <polygon class="wf" points="1280,145 1260,150 1250,180 1255,200 1280,202 1282,160"/>
      </g>
      <text class="ltl" x="107" y="906">Hippocampus</text>
      <text class="ltl" x="275.500" y="932">Amygdala</text>
      <text class="ltl" x="705.500" y="928">Amygdala</text>
      <text class="ltl" x="866" y="900">Hippocampus</text>
    </svg>
    <div class="ctl c-file">080218 EO<span class="dd"></span></div>
    <div class="ctl c-frq">All Frequencies<span class="dd"></span></div>
    <button class="btn disp" type="button">Display Results</button>
  </div>
</div>
<div class="stabs d-flex overflow-hidden">
  <div class="nav0"><i class="p"></i><i class="f"></i></div>
  <div class="st g t83">Start Page</div><div class="st act t116">FFT Max - Bins</div><div class="st t121">FFT Max - Bands</div><div class="st t98">Center Voxel</div><div class="st t141">FFT Average -Bands</div><div class="st t150">JTFA Absolute Power</div><div class="st t84">Coherence</div><div class="st t56">Phase</div><div class="st t49">Lock</div><div class="st t48">Shift</div><div class="st t132">Protocol 1 Targets</div><div class="st t133">Protocol 2 Targets</div><div class="st t130">Protocol 3 Targets</div>
</div>
<div class="stat d-flex">Ready<svg width="14" height="12" viewBox="0 0 14 12"><circle cx="4" cy="3" r="3" fill="#666"/><rect x="8" y="0" width="6" height="6" fill="#888"/></svg></div>
<script src="https://cdn.jsdelivr.net/npm/bootstrap@5.3.0/dist/js/bootstrap.bundle.min.js"></script>
<script>
/* round the hand-traced outlines into Catmull-Rom curves */
document.querySelectorAll('.canvas svg polygon, .canvas svg polyline').forEach(function(el){
  var p=el.getAttribute('points').trim().split(/\s+/).map(function(s){return s.split(',').map(Number)});
  var closed=el.tagName==='polygon',n=p.length,k=1/7;
  var at=function(i){return closed?p[(i+n)%n]:p[Math.max(0,Math.min(n-1,i))]};
  var d='M'+p[0].join(' ');
  for(var i=0;i<(closed?n:n-1);i++){
    var a=at(i-1),b=at(i),c=at(i+1),e=at(i+2);
    d+='C'+(b[0]+(c[0]-a[0])*k)+' '+(b[1]+(c[1]-a[1])*k)+' '+(c[0]-(e[0]-b[0])*k)+' '+(c[1]-(e[1]-b[1])*k)+' '+c[0]+' '+c[1];
  }
  if(closed)d+='Z';
  var q=document.createElementNS('http://www.w3.org/2000/svg','path');
  for(var j=0;j<el.attributes.length;j++){var at2=el.attributes[j];if(at2.name!=='points')q.setAttribute(at2.name,at2.value)}
  q.setAttribute('d',d);
  el.parentNode.replaceChild(q,el);
});
</script>
</body>
</html>
